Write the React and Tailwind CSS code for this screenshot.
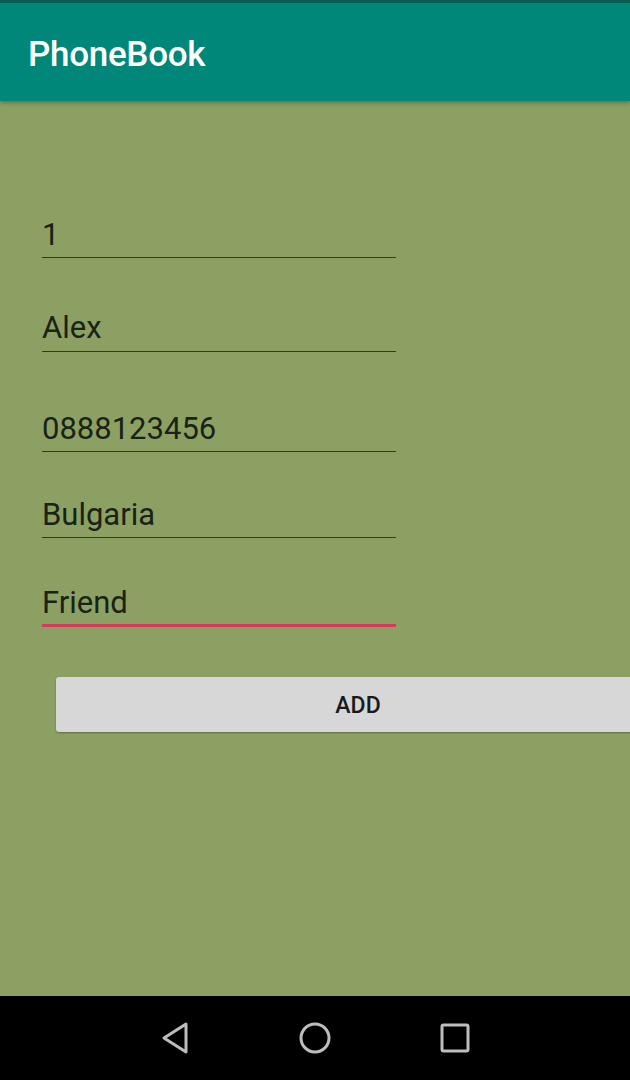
import React from "react";

const fields = [
  { value: "1", mt: "mt-[116px]", pb: "pb-[5px]" },
  { value: "Alex", mt: "mt-[52px]", pb: "pb-[6px]" },
  { value: "0888123456", mt: "mt-[59px]", pb: "pb-[5px]" },
  { value: "Bulgaria", mt: "mt-[45px]", pb: "pb-[5px]" },
];

export default function App() {
  return (
    <div
      className="h-[1080px] w-[630px] flex flex-col overflow-hidden bg-[#8da064]"
      style={{ fontFamily: "Roboto, 'Noto Sans', sans-serif" }}
    >
      {/* status strip + toolbar */}
      <div className="h-[3px] bg-[#0b5e52]" />
      <div className="h-[98px] bg-[#00877a] flex items-center px-[28px] pt-[4px] shadow-[0_2px_4px_rgba(0,0,0,0.3)] relative z-10">
        <h1 className="text-white text-[35px] font-medium tracking-[-0.3px] leading-none">PhoneBook</h1>
      </div>

      {/* form */}
      <div className="flex-1 flex flex-col">
        {fields.map((f) => (
          <div
            key={f.value}
            className={`${f.mt} ${f.pb} ml-[42px] w-[354px] border-b border-[#323d1f] text-[31px] leading-[35px] text-[#1a2313]`}
          >
            {f.value}
          </div>
        ))}
        <div className="mt-[47px] pb-[4px] ml-[42px] w-[354px] border-b-[3px] border-[#d23a5e] text-[31px] leading-[35px] text-[#1a2313]">
          Friend
        </div>

        <div className="mt-[50px] ml-[56px]">
          <button className="w-[604px] h-[55px] pt-[3px] rounded-[3px] bg-[#d6d7d6] shadow-[0_1px_2px_rgba(0,0,0,0.35)] text-[23px] font-medium text-[#1a1a1a]">
            ADD
          </button>
        </div>
      </div>

      {/* nav bar */}
      <div className="h-[84px] bg-black flex items-center justify-center gap-[104px]">
        <svg width="36" height="36" viewBox="0 0 36 36" fill="none" stroke="#bdbdbd" strokeWidth="3" strokeLinejoin="round">
          <path d="M29 4 L7 18 L29 32 Z" />
        </svg>
        <svg width="36" height="36" viewBox="0 0 36 36" fill="none" stroke="#bdbdbd" strokeWidth="3">
          <circle cx="18" cy="18" r="14" />
        </svg>
        <svg width="36" height="36" viewBox="0 0 36 36" fill="none" stroke="#bdbdbd" strokeWidth="3">
          <rect x="5" y="5" width="26" height="26" rx="1.5" />
        </svg>
      </div>
    </div>
  );
}
